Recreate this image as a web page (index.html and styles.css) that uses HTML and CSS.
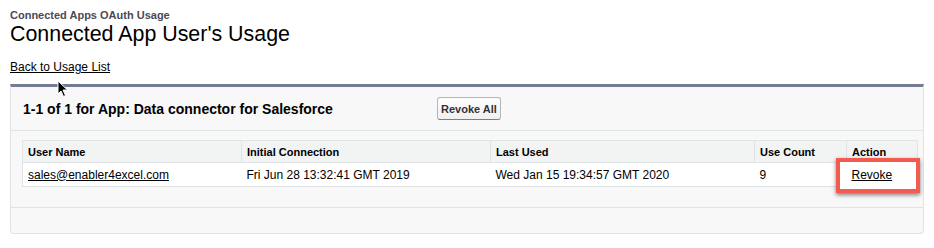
FILE: index.html
```html
<!DOCTYPE html>
<html lang="en">
<head>
    <meta charset="UTF-8">
    <title>Connected App User's Usage</title>
    <link rel="stylesheet" href="styles.css">
</head>
<body>
    <div class="page-head">
        <div class="page-type">Connected Apps OAuth Usage</div>
        <h1 class="page-title">Connected App User's Usage</h1>
    </div>
    <div class="back-link"><a href="#">Back to Usage List</a></div>

    <div class="panel">
        <div class="panel-header">
            <h2 class="panel-title">1-1 of 1 for App: Data connector for Salesforce</h2>
            <button class="btn">Revoke All</button>
        </div>
        <div class="panel-body">
            <table class="list">
                <tr class="header-row">
                    <th class="col-user">User Name</th>
                    <th class="col-init">Initial Connection</th>
                    <th class="col-last">Last Used</th>
                    <th class="col-count">Use Count</th>
                    <th class="col-action">Action</th>
                </tr>
                <tr class="data-row">
                    <td><a href="#">sales@enabler4excel.com</a></td>
                    <td>Fri Jun 28 13:32:41 GMT 2019</td>
                    <td>Wed Jan 15 19:34:57 GMT 2020</td>
                    <td>9</td>
                    <td class="action-cell">
                        <span class="callout"></span>
                        <a href="#" class="revoke">Revoke</a>
                    </td>
                </tr>
            </table>
        </div>
        <div class="panel-footer"></div>
    </div>

    <!-- mouse pointer from the screenshot -->
    <svg class="cursor" width="12" height="18" viewBox="0 0 12 18">
        <path d="M1 1 L1 14 L4 11 L6.5 16.5 L8.5 15.5 L6 10 L10.5 10 Z" fill="#000" stroke="#fff" stroke-width="1"/>
    </svg>
</body>
</html>
```

FILE: styles.css
```css
body {
    margin: 0;
    padding: 8px 10px;
    font-family: "Liberation Sans", Arial, sans-serif;
    color: #000;
    background: #fff;
    position: relative;
}

a {
    color: #000;
}

.page-type {
    font-size: 11px;
    font-weight: bold;
    color: #4a4a56;
    line-height: 14px;
}

.page-title {
    margin: 0;
    font-size: 21.4px;
    font-weight: normal;
    line-height: 24px;
}

.back-link {
    font-size: 12px;
    margin-top: 13px;
    line-height: 16px;
}

.panel {
    margin-top: 9px;
    background: #f8f8f8;
    border: 1px solid #e2e3e5;
    border-top: 3px solid #747c95;
    border-radius: 0 0 4px 4px;
}

.panel-header {
    display: flex;
    align-items: center;
    height: 43px;
    padding-left: 12px;
    border-bottom: 1px solid #e0e3e5;
}

.panel-title {
    margin: 0;
    width: 414px;
    font-size: 14px;
    font-weight: bold;
}

.btn {
    font-family: "Liberation Sans", Arial, sans-serif;
    font-size: 11px;
    font-weight: bold;
    color: #333;
    height: 23px;
    padding: 0 3px;
    background: linear-gradient(#fff, #f0f0f0);
    border: 1px solid #b5b5b5;
    border-bottom-color: #7f7f7f;
    border-radius: 3px;
}

.panel-body {
    padding: 9px 11px 20px 11px;
    border-bottom: 1px solid #e0e3e5;
}

.list {
    width: 896px;
    border-collapse: collapse;
    background: #fff;
    border: 1px solid #e0e3e5;
}

.list th,
.list td {
    text-align: left;
    padding: 0 5px;
    border-bottom: 1px solid #e0e3e5;
}

.list th {
    height: 21px;
    font-size: 11px;
    font-weight: bold;
    color: #000;
    background: #f2f3f3;
    border-left: 1px solid #e0e3e5;
}

.list td {
    height: 23px;
    font-size: 12px;
}

.col-user { width: 208px; }
.col-init { width: 238px; }
.col-last { width: 253px; }
.col-count { width: 81px; }

.action-cell {
    position: relative;
}

.callout {
    position: absolute;
    left: -11px;
    top: -5px;
    right: -3px;
    bottom: -7px;
    border: 4px solid #f25b4d;
    background: #fff;
    box-shadow: 0 2px 4px rgba(0, 0, 0, 0.5);
}

.revoke {
    position: relative;
}

.panel-footer {
    height: 25px;
}

.cursor {
    position: absolute;
    left: 57px;
    top: 80px;
}
```
